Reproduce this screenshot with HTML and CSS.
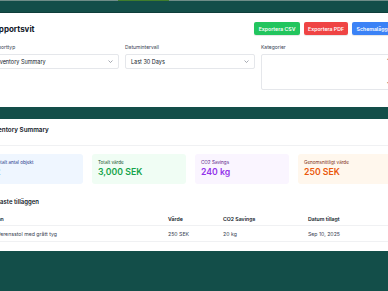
FILE: index.html
```html
<!DOCTYPE html>
<html lang="sv">
<head>
    <meta charset="UTF-8">
    <meta name="viewport" content="width=device-width, initial-scale=1.0">
    <title>Rapportsvit</title>
    <link rel="stylesheet" href="styles.css">
</head>
<body>
    <div class="tabs">
        <div class="tab-active"></div>
    </div>
    <div class="topbar"></div>

    <div class="page">
        <section class="card card-filters">
            <div class="header-row">
                <h1 class="title">Rapportsvit</h1>
                <div class="actions">
                    <button class="btn btn-green">Exportera CSV</button>
                    <button class="btn btn-red">Exportera PDF</button>
                    <button class="btn btn-blue">Schemalägg</button>
                </div>
            </div>

            <div class="filters">
                <div class="field">
                    <label>Rapporttyp</label>
                    <div class="select">
                        <span>Inventory Summary</span>
                        <svg class="chevron" viewBox="0 0 10 6"><path d="M1 1l4 4 4-4" fill="none" stroke="#6b7280" stroke-width="1.2"/></svg>
                    </div>
                </div>
                <div class="field">
                    <label>Datumintervall</label>
                    <div class="select">
                        <span>Last 30 Days</span>
                        <svg class="chevron" viewBox="0 0 10 6"><path d="M1 1l4 4 4-4" fill="none" stroke="#6b7280" stroke-width="1.2"/></svg>
                    </div>
                </div>
                <div class="field">
                    <label>Kategorier</label>
                    <div class="multi">
                        <div class="scroll">
                            <span class="arrow">▲</span>
                            <span class="arrow">▼</span>
                        </div>
                    </div>
                </div>
            </div>
        </section>

        <section class="card card-report">
            <div class="report-head">
                <h2>Inventory Summary</h2>
            </div>

            <div class="report-body">
                <div class="stats">
                    <div class="stat stat-blue">
                        <div class="stat-label">Totalt antal objekt</div>
                        <div class="stat-value">2</div>
                    </div>
                    <div class="stat stat-green">
                        <div class="stat-label">Totalt värde</div>
                        <div class="stat-value">3,000 SEK</div>
                    </div>
                    <div class="stat stat-purple">
                        <div class="stat-label">CO2 Savings</div>
                        <div class="stat-value">240 kg</div>
                    </div>
                    <div class="stat stat-orange">
                        <div class="stat-label">Genomsnittligt värde</div>
                        <div class="stat-value">250 SEK</div>
                    </div>
                </div>

                <h3>Senaste tilläggen</h3>

                <div class="table">
                    <div class="row row-head">
                        <div>Namn</div>
                        <div>Värde</div>
                        <div>CO2 Savings</div>
                        <div>Datum tillagt</div>
                    </div>
                    <div class="row">
                        <div>Konferensstol med grått tyg</div>
                        <div>250 SEK</div>
                        <div>20 kg</div>
                        <div>Sep 10, 2025</div>
                    </div>
                </div>
            </div>
        </section>
    </div>
</body>
</html>
```

FILE: styles.css
```css
* {
    margin: 0;
    padding: 0;
    box-sizing: border-box;
}

html, body {
    overflow: hidden;
}

body {
    font-family: Inter, 'Noto Sans', sans-serif;
    background: #134e49;
    color: #111827;
    min-height: 100vh;
}

.tabs {
    height: 1px;
    background: #6f8d88;
}

.tab-active {
    margin-left: 118px;
    width: 51px;
    height: 1px;
    background: #3f7d2d;
}

.topbar {
    height: 12px;
    background: #134e49;
    border-bottom: 1px solid #0e3e3a;
}

.page {
    margin-left: -31px;
    width: 443px;
}

.card {
    background: #fff;
}

.card-filters {
    padding: 9px 20px 17px;
    margin-bottom: 12px;
}

.header-row {
    display: flex;
    justify-content: space-between;
    align-items: center;
    height: 13px;
}

.title {
    font-size: 8px;
    font-weight: 700;
    color: #111827;
}

.actions {
    display: flex;
    gap: 4px;
}

.btn {
    height: 13px;
    padding: 0 4.3px;
    border: none;
    border-radius: 2px;
    color: #fff;
    font-family: inherit;
    font-size: 5.2px;
    font-weight: 600;
    box-shadow: 0 1px 1px rgba(0, 0, 0, 0.1);
}

.btn-green {
    background: #22c55e;
}

.btn-red {
    background: #ef4444;
}

.btn-blue {
    background: #3b82f6;
}

.filters {
    display: grid;
    grid-template-columns: 130px 130px 1fr;
    gap: 6px;
    margin-top: 9px;
    align-items: start;
}

.field label {
    display: block;
    font-size: 5px;
    line-height: 7px;
    color: #374151;
    margin-bottom: 3px;
}

.select {
    height: 15px;
    border: 1px solid #e5e7eb;
    border-radius: 2px;
    display: flex;
    align-items: center;
    justify-content: space-between;
    padding: 0 5px;
    font-size: 5.5px;
    color: #111827;
}

.chevron {
    width: 5px;
    height: 3px;
}

.multi {
    height: 36px;
    border: 1px solid #e5e7eb;
    border-radius: 2px;
    display: flex;
    justify-content: flex-end;
    padding-right: 1px;
}

.scroll {
    display: flex;
    flex-direction: column;
    justify-content: space-between;
    padding: 3px 0;
}

.arrow {
    font-size: 3px;
    color: #6b7280;
    line-height: 3px;
}

.card-report {
    padding-bottom: 9px;
}

.report-head {
    padding: 5px 20px 9px;
    border-bottom: 1px solid #f0f1f3;
}

.report-head h2 {
    font-size: 6.3px;
    line-height: 12px;
    font-weight: 600;
}

.report-body {
    padding: 8px 20px 0;
}

.stats {
    display: grid;
    grid-template-columns: repeat(4, 1fr);
    gap: 9px;
}

.stat {
    height: 30px;
    border-radius: 3px;
    padding: 5px 6px;
}

.stat-label {
    font-size: 4.6px;
    line-height: 7px;
}

.stat-value {
    font-size: 8.7px;
    line-height: 12px;
    font-weight: 600;
}

.stat-blue {
    background: #eff6ff;
}

.stat-blue .stat-label {
    color: #1e3a8a;
}

.stat-blue .stat-value {
    color: #2563eb;
}

.stat-green {
    background: #f0fdf4;
}

.stat-green .stat-label {
    color: #14532d;
}

.stat-green .stat-value {
    color: #16a34a;
}

.stat-purple {
    background: #faf5ff;
}

.stat-purple .stat-label {
    color: #581c87;
}

.stat-purple .stat-value {
    color: #9333ea;
}

.stat-orange {
    background: #fff7ed;
}

.stat-orange .stat-label {
    color: #7c2d12;
}

.stat-orange .stat-value {
    color: #ea580c;
}

h3 {
    margin-top: 13px;
    font-size: 6px;
    line-height: 10px;
    font-weight: 600;
}

.table {
    margin-top: 5px;
}

.row {
    display: grid;
    grid-template-columns: 179px 55px 85px 1fr;
    font-size: 5.2px;
    height: 16px;
    align-items: center;
    border-bottom: 1px solid #f0f1f3;
    color: #374151;
}

.row-head {
    height: 14px;
    font-weight: 600;
    color: #111827;
}
```
